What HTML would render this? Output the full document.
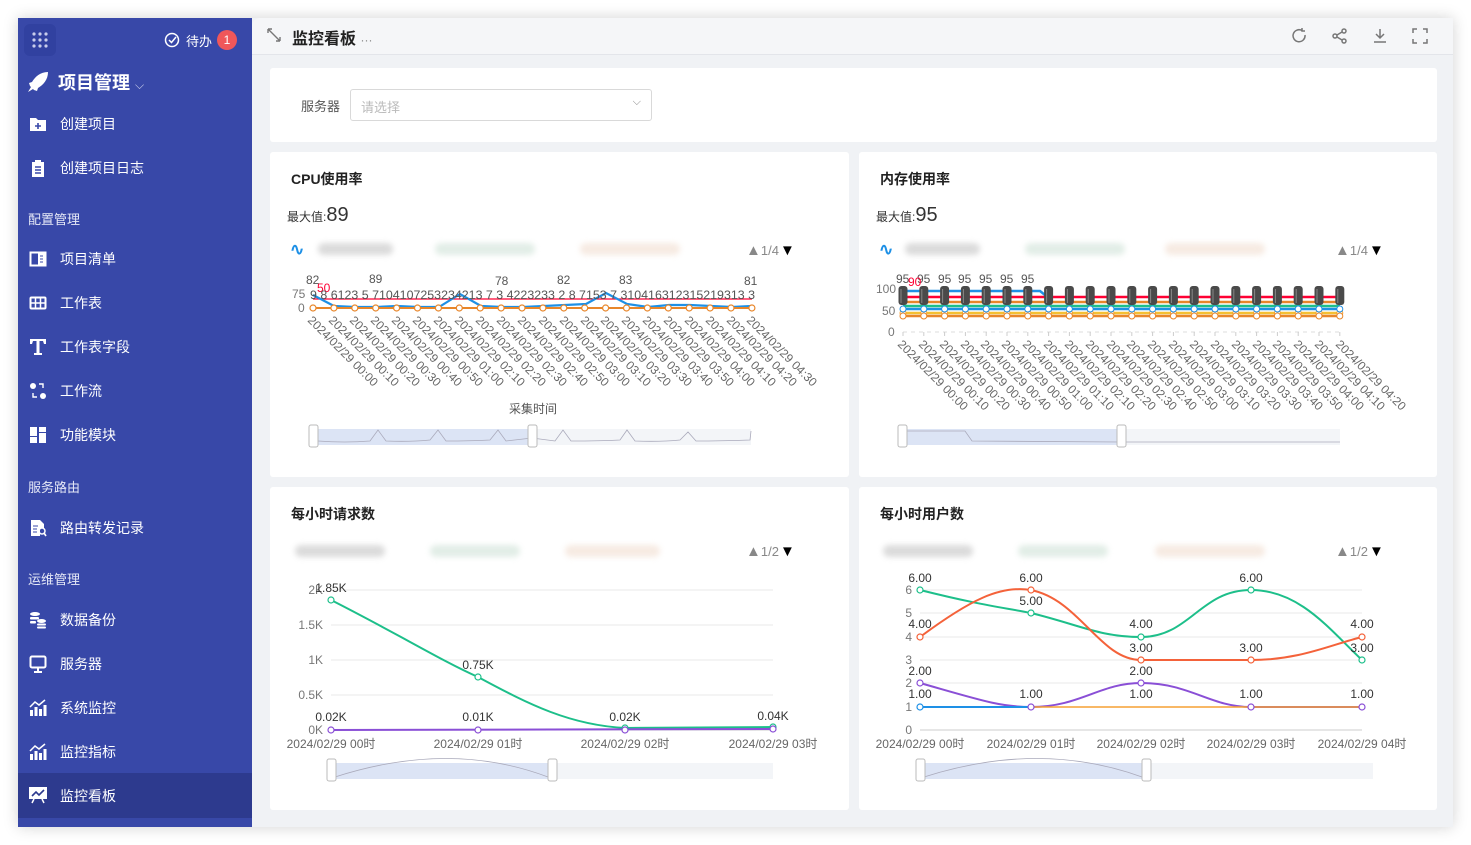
<!DOCTYPE html>
<html><head><meta charset="utf-8">
<style>
*{box-sizing:border-box;margin:0;padding:0}
body{width:1471px;height:845px;background:#fff;font-family:"Liberation Sans","Noto Sans CJK SC",sans-serif;position:relative;overflow:hidden}
#frame{position:absolute;left:18px;top:18px;width:1435px;height:809px;background:#f0f2f5;box-shadow:0 0 14px rgba(0,0,0,.18);overflow:hidden}
#side{position:absolute;left:0;top:0;width:234px;height:809px;background:#3848a8;color:#fff}
.mi{position:absolute;left:0;width:234px;height:44px;font-size:14px;display:flex;align-items:center;padding-left:42px}
.mi svg{position:absolute;left:11px;top:13px}
.sec{position:absolute;left:10px;font-size:13px;color:#e6e9f7}
#head{position:absolute;left:234px;top:0;width:1201px;height:37px;background:#f5f6f8;border-bottom:1px solid #e3e5ea;border-top-left-radius:8px}
.card{position:absolute;background:#fff;border-radius:3px}
.ct{position:absolute;left:21px;top:17px;font-size:14px;font-weight:bold;color:#222}
svg text{font-family:"Liberation Sans","Noto Sans CJK SC",sans-serif}
.blur{position:absolute;height:12px;background:#ccc;border-radius:6px;filter:blur(3px);opacity:.7}
</style></head><body>
<div id="frame">
<div id="side">
 <div style="position:absolute;left:6px;top:6px;width:32px;height:32px;border-radius:6px;background:#3141a0"></div>
 <svg style="position:absolute;left:14px;top:14px" width="16" height="16"><g fill="#c8cdeb"><circle cx="2" cy="2" r="1.6"/><circle cx="8" cy="2" r="1.6"/><circle cx="14" cy="2" r="1.6"/><circle cx="2" cy="8" r="1.6"/><circle cx="8" cy="8" r="1.6"/><circle cx="14" cy="8" r="1.6"/><circle cx="2" cy="14" r="1.6"/><circle cx="8" cy="14" r="1.6"/><circle cx="14" cy="14" r="1.6"/></g></svg>
 <svg style="position:absolute;left:146px;top:14px" width="16" height="16"><circle cx="8" cy="8" r="6.5" fill="none" stroke="#fff" stroke-width="1.5"/><path d="M5 8l2.5 2.5L12 5" fill="none" stroke="#fff" stroke-width="1.5"/></svg>
 <div style="position:absolute;left:168px;top:13px;font-size:13px">待办</div>
 <div style="position:absolute;left:199px;top:12px;width:20px;height:20px;border-radius:10px;background:#f0575a;font-size:12px;text-align:center;line-height:20px">1</div>
 <svg style="position:absolute;left:8px;top:52px" width="24" height="24"><path d="M22 2C14 2 9 7 6 12l-3 1 1 3 4 4 3 1 1-3c5-3 10-8 10-16zM5 17l-3 5 5-3z" fill="#fff"/></svg>
 <div style="position:absolute;left:40px;top:51px;font-size:18px;font-weight:bold">项目管理 <span style="font-size:12px;font-weight:normal;color:#c8cdeb">⌵</span></div>
 <div class="mi" style="top:84px"><svg width="18" height="18"><path d="M1 3h6l2 2h8v11H1z" fill="#fff"/><path d="M9 8v6M6 11h6" stroke="#3848a8" stroke-width="1.6"/></svg>创建项目</div>
 <div class="mi" style="top:128px"><svg width="18" height="18"><path d="M3 3h3V1h6v2h3v15H3z" fill="#fff"/><path d="M6 8h6M6 11h6M6 14h6" stroke="#3848a8" stroke-width="1.4"/></svg>创建项目日志</div>
 <div class="sec" style="top:191px">配置管理</div>
 <div class="mi" style="top:219px"><svg width="18" height="18"><rect x="1.5" y="2.5" width="15" height="13" fill="none" stroke="#fff" stroke-width="2"/><rect x="9" y="3" width="7" height="12" fill="#fff"/><path d="M11 6h3M11 9h3M11 12h3" stroke="#3848a8"/></svg>项目清单</div>
 <div class="mi" style="top:263px"><svg width="18" height="18"><rect x="1.5" y="3.5" width="15" height="11" rx="1" fill="none" stroke="#fff" stroke-width="2"/><path d="M1 9h16M6.5 4v10M11.5 4v10" stroke="#fff" stroke-width="1.5"/></svg>工作表</div>
 <div class="mi" style="top:307px"><svg width="18" height="18"><path d="M1 1h16v5h-2l-1-3h-3.5v12H13v2H5v-2h2.5V3H4L3 6H1z" fill="#fff"/></svg>工作表字段</div>
 <div class="mi" style="top:351px"><svg width="18" height="18" fill="#fff"><circle cx="4" cy="4" r="3"/><circle cx="14" cy="14" r="3"/><path d="M10 2h4v4M4 11v4h4" fill="none" stroke="#fff" stroke-width="1.4"/></svg>工作流</div>
 <div class="mi" style="top:395px"><svg width="18" height="18" fill="#fff"><rect x="1" y="1" width="7" height="9"/><rect x="1" y="11" width="7" height="6"/><rect x="10" y="1" width="7" height="5"/><rect x="10" y="7" width="7" height="10"/></svg>功能模块</div>
 <div class="sec" style="top:459px">服务路由</div>
 <div class="mi" style="top:488px"><svg width="18" height="18"><path d="M2 1h9l4 4v4h-4v8H2z" fill="#fff"/><circle cx="13" cy="12" r="3" fill="none" stroke="#fff" stroke-width="1.5"/><path d="M15 14l2 3" stroke="#fff" stroke-width="1.6"/><path d="M4 7h5M4 10h4M4 13h4" stroke="#3848a8"/></svg>路由转发记录</div>
 <div class="sec" style="top:551px">运维管理</div>
 <div class="mi" style="top:580px"><svg width="18" height="18" fill="#fff"><ellipse cx="6" cy="3" rx="5" ry="2"/><rect x="1" y="6" width="9" height="2.5" rx="1"/><rect x="1" y="10" width="6" height="2.5" rx="1"/><ellipse cx="12.5" cy="10" rx="4.5" ry="2"/><rect x="8" y="12.5" width="9" height="2" rx="1"/><rect x="8" y="15.5" width="9" height="2" rx="1"/></svg>数据备份</div>
 <div class="mi" style="top:624px"><svg width="18" height="18"><rect x="1.5" y="1.5" width="15" height="11" rx="1.5" fill="none" stroke="#fff" stroke-width="2"/><path d="M9 13v3M5 17h8" stroke="#fff" stroke-width="2"/></svg>服务器</div>
 <div class="mi" style="top:668px"><svg width="18" height="18" fill="#fff"><rect x="1" y="11" width="3" height="6"/><rect x="5.5" y="8" width="3" height="9"/><rect x="10" y="10" width="3" height="7"/><rect x="14.5" y="6" width="3" height="11"/><path d="M1 8l5-5 4 3 6-5" fill="none" stroke="#fff" stroke-width="1.5"/></svg>系统监控</div>
 <div class="mi" style="top:712px"><svg width="18" height="18" fill="#fff"><rect x="1" y="11" width="3" height="6"/><rect x="5.5" y="8" width="3" height="9"/><rect x="10" y="10" width="3" height="7"/><rect x="14.5" y="6" width="3" height="11"/><path d="M1 8l5-5 4 3 6-5" fill="none" stroke="#fff" stroke-width="1.5"/></svg>监控指标</div>
 <div class="mi" style="top:755px;height:45px;background:#2d3a8e"><svg width="18" height="18"><rect x="0" y="1" width="18" height="12" fill="#fff"/><path d="M3 10l4-4 3 3 5-5" fill="none" stroke="#2d3a8e" stroke-width="1.6"/><path d="M5 13l-2 4M13 13l2 4" stroke="#fff" stroke-width="1.5"/></svg>监控看板</div>
</div>
<div id="head">
 <svg style="position:absolute;left:15px;top:10px" width="14" height="14"><path d="M1 1l12 12M1 1h4M1 1v4M13 13h-4M13 13v-4" stroke="#777" stroke-width="1.4" fill="none"/></svg>
 <div style="position:absolute;left:40px;top:7px;font-size:16px;font-weight:bold;color:#222">监控看板 <span style="font-size:12px;color:#888;font-weight:normal">···</span></div>
 <svg style="position:absolute;left:1040px;top:10px" width="160" height="16" fill="none" stroke="#777" stroke-width="1.5">
  <path d="M13 7A6 6 0 1 1 10 2.5M10 0v3h3"/>
  <g transform="translate(40,0)"><circle cx="12" cy="3" r="2"/><circle cx="3" cy="8" r="2"/><circle cx="12" cy="13" r="2"/><path d="M5 7l5-3M5 9l5 3"/></g>
  <g transform="translate(80,0)"><path d="M8 1v9M4 6l4 4 4-4M2 14h12"/></g>
  <g transform="translate(120,0)"><path d="M1 5V1h4M11 1h4v4M15 11v4h-4M5 15H1v-4"/></g>
 </svg>
</div>
<div class="card" style="left:252px;top:50px;width:1167px;height:74px">
 <div style="position:absolute;left:31px;top:28px;font-size:13px;color:#555">服务器</div>
 <div style="position:absolute;left:80px;top:21px;width:302px;height:32px;border:1px solid #d9d9d9;border-radius:3px;font-size:13px;color:#bbb;padding:7px 10px">请选择<span style="position:absolute;right:10px;top:6px;color:#888;font-size:11px">⌵</span></div>
</div>
<div class="card" style="left:252px;top:134px;width:579px;height:325px">
 <div class="ct">CPU使用率</div>
 <div style="position:absolute;left:17px;top:52px;font-size:12px;color:#333">最大值:<span style="font-size:20px">89</span></div>
</div>
<div class="card" style="left:841px;top:134px;width:578px;height:325px">
 <div class="ct">内存使用率</div>
 <div style="position:absolute;left:17px;top:52px;font-size:12px;color:#333">最大值:<span style="font-size:20px">95</span></div>
</div>
<div class="card" style="left:252px;top:469px;width:579px;height:323px"><div class="ct">每小时请求数</div></div>
<div class="card" style="left:841px;top:469px;width:578px;height:323px"><div class="ct">每小时用户数</div></div>
</div>

<div class="blur" style="left:318px;top:243px;width:75px"></div><div class="blur" style="left:435px;top:243px;width:100px;background:#d5e6dc"></div><div class="blur" style="left:580px;top:243px;width:100px;background:#f3e2d6"></div>
<div class="blur" style="left:905px;top:243px;width:75px"></div><div class="blur" style="left:1025px;top:243px;width:100px;background:#d5e6dc"></div><div class="blur" style="left:1165px;top:243px;width:100px;background:#f3e2d6"></div>
<div class="blur" style="left:295px;top:545px;width:90px"></div><div class="blur" style="left:430px;top:545px;width:90px;background:#d5e6dc"></div><div class="blur" style="left:565px;top:545px;width:95px;background:#f3e2d6"></div>
<div class="blur" style="left:883px;top:545px;width:90px"></div><div class="blur" style="left:1018px;top:545px;width:90px;background:#d5e6dc"></div><div class="blur" style="left:1155px;top:545px;width:110px;background:#f3e2d6"></div>

<svg id="g" style="position:absolute;left:0;top:0" width="1471" height="845" font-size="12" fill="#666">
 <g font-size="13">
  <text x="290" y="255" fill="#1e90e6" font-size="17" font-weight="bold">∿</text><text x="746" y="255" fill="#888"><tspan font-size="15">▲</tspan>1/4</text><text x="780" y="255" fill="#000" font-size="15">▼</text>
  <text x="879" y="255" fill="#1e90e6" font-size="17" font-weight="bold">∿</text><text x="1335" y="255" fill="#888"><tspan font-size="15">▲</tspan>1/4</text><text x="1369" y="255" fill="#000" font-size="15">▼</text>
  <text x="746" y="556" fill="#888"><tspan font-size="15">▲</tspan>1/2</text><text x="780" y="556" fill="#000" font-size="15">▼</text>
  <text x="1335" y="556" fill="#888"><tspan font-size="15">▲</tspan>1/2</text><text x="1369" y="556" fill="#000" font-size="15">▼</text>
 </g>
 <text x="292" y="298" fill="#777">75</text><text x="298" y="312" fill="#777">0</text>
 <line x1="313" y1="299" x2="752" y2="299" stroke="#f03" stroke-width="1.2"/>
 <text x="317" y="292" fill="#f03">50</text>
 <polyline fill="none" stroke="#1e90e6" stroke-width="2.2" points="313,295 334,306 355,307 376,307 397,306 418,307 439,307 460,294 481,306 502,307 523,307 544,306 565,305 586,304 606,293 627,304 648,307 669,305 690,305 711,306 732,307 752,306"/>
 <polyline fill="none" stroke="#e8862a" stroke-width="2" points="313,308 752,308"/>
 <g id="cpuc"></g>
 <g font-size="12" fill="#555">
  <text x="306" y="284">82</text><text x="369" y="283">89</text><text x="495" y="285">78</text><text x="557" y="284">82</text><text x="619" y="284">83</text><text x="744" y="285">81</text>
  <text x="310" y="299" textLength="445" lengthAdjust="spacingAndGlyphs">9 8 6123 5 7104107253234213 7 3 4223233 2 8 7153 7 310416312315219313 3</text>
 </g>
 <text x="509" y="413" fill="#555">采集时间</text>
 <rect x="313" y="429" width="219" height="16" fill="#dce4f5"/><rect x="532" y="429" width="219" height="16" fill="#f3f5f8"/>
 <path d="M318 441 Q345 443 370 441 L378 430 L386 441 Q410 442 430 440 L438 430 L446 441 Q470 441 490 440 L498 430 L506 441 L532 438 L555 441 L563 430 L571 441 Q600 441 620 440 L627 430 L635 441 Q660 442 680 440 L688 432 L696 441 Q720 441 750 440 L751 431" fill="none" stroke="#aab" stroke-width=".8"/>
 <rect x="309" y="425" width="9" height="22" rx="2" fill="#fff" stroke="#bbb"/><rect x="528" y="425" width="9" height="22" rx="2" fill="#fff" stroke="#bbb"/>
 <text x="876" y="293" fill="#777">100</text><text x="882" y="315" fill="#777">50</text><text x="888" y="336" fill="#777">0</text>
 <line x1="903" y1="332" x2="1340" y2="332" stroke="#ddd" stroke-dasharray="4 4"/>
 <g id="memb"></g>
 <g fill="#555"><text x="896" y="283">95</text><text x="917" y="283">95</text><text x="938" y="283">95</text><text x="958" y="283">95</text><text x="979" y="283">95</text><text x="1000" y="283">95</text><text x="1021" y="283">95</text></g>
 <text x="908" y="286" fill="#f03">90</text>
 <rect x="903" y="429" width="218" height="16" fill="#dce4f5"/><rect x="1121" y="429" width="219" height="16" fill="#f3f5f8"/>
 <path d="M907 431 L965 431 L972 441 L1120 442 L1340 442" fill="none" stroke="#aab" stroke-width=".8"/>
 <rect x="898" y="425" width="9" height="22" rx="2" fill="#fff" stroke="#bbb"/><rect x="1117" y="425" width="9" height="22" rx="2" fill="#fff" stroke="#bbb"/>
 <g stroke="#e8e8e8"><line x1="331" y1="590" x2="773" y2="590"/><line x1="331" y1="625" x2="773" y2="625"/><line x1="331" y1="660" x2="773" y2="660"/><line x1="331" y1="695" x2="773" y2="695"/><line x1="331" y1="730" x2="773" y2="730" stroke="#ccc"/></g>
 <g fill="#777" text-anchor="end"><text x="323" y="594">2K</text><text x="323" y="629">1.5K</text><text x="323" y="664">1K</text><text x="323" y="699">0.5K</text><text x="323" y="734">0K</text></g>
 <path d="M331 600 C400 635 440 660 478 677 C530 705 570 725 625 728 L773 727" fill="none" stroke="#1dbf8a" stroke-width="2"/>
 <line x1="331" y1="730" x2="773" y2="729" stroke="#8a4fd6" stroke-width="2"/>
 <g fill="#fff" stroke-width="1.2"><circle cx="331" cy="600" r="3" stroke="#1dbf8a"/><circle cx="478" cy="677" r="3" stroke="#1dbf8a"/><circle cx="625" cy="728" r="3" stroke="#1dbf8a"/><circle cx="773" cy="727" r="3" stroke="#1dbf8a"/><circle cx="331" cy="730" r="3" stroke="#8a4fd6"/><circle cx="478" cy="730" r="3" stroke="#8a4fd6"/><circle cx="625" cy="730" r="3" stroke="#8a4fd6"/><circle cx="773" cy="729" r="3" stroke="#8a4fd6"/></g>
 <g fill="#333" text-anchor="middle"><text x="331" y="592">1.85K</text><text x="478" y="669">0.75K</text><text x="331" y="721">0.02K</text><text x="478" y="721">0.01K</text><text x="625" y="721">0.02K</text><text x="773" y="720">0.04K</text></g>
 <g fill="#666" text-anchor="middle"><text x="331" y="748">2024/02/29 00时</text><text x="478" y="748">2024/02/29 01时</text><text x="625" y="748">2024/02/29 02时</text><text x="773" y="748">2024/02/29 03时</text></g>
 <rect x="331" y="763" width="221" height="16" fill="#dce4f5"/><rect x="552" y="763" width="221" height="16" fill="#f3f5f8"/>
 <path d="M335 777 Q450 740 548 777" fill="none" stroke="#aab" stroke-width=".8"/>
 <rect x="327" y="759" width="9" height="22" rx="2" fill="#fff" stroke="#bbb"/><rect x="548" y="759" width="9" height="22" rx="2" fill="#fff" stroke="#bbb"/>
 <g stroke="#e8e8e8"><line x1="920" y1="590" x2="1362" y2="590"/><line x1="920" y1="613" x2="1362" y2="613"/><line x1="920" y1="637" x2="1362" y2="637"/><line x1="920" y1="660" x2="1362" y2="660"/><line x1="920" y1="683" x2="1362" y2="683"/><line x1="920" y1="707" x2="1362" y2="707"/><line x1="920" y1="730" x2="1362" y2="730" stroke="#ccc"/></g>
 <g fill="#777" text-anchor="end"><text x="912" y="594">6</text><text x="912" y="617">5</text><text x="912" y="641">4</text><text x="912" y="664">3</text><text x="912" y="687">2</text><text x="912" y="711">1</text><text x="912" y="734">0</text></g>
 <path d="M920 590 C980 605 1000 607 1031 613 C1080 625 1100 637 1141 637 C1190 637 1200 590 1251 590 C1300 590 1330 630 1362 660" fill="none" stroke="#1dbf8a" stroke-width="2"/>
 <path d="M920 637 C970 600 1000 585 1031 590 C1080 600 1100 660 1141 660 L1251 660 C1300 660 1330 645 1362 637" fill="none" stroke="#f4623a" stroke-width="2"/>
 <path d="M920 683 C980 700 1000 707 1031 707 C1080 707 1100 683 1141 683 C1190 683 1210 707 1251 707 L1362 707" fill="none" stroke="#8a4fd6" stroke-width="2"/>
 <line x1="920" y1="707" x2="1031" y2="707" stroke="#1e90e6" stroke-width="2"/><line x1="1031" y1="707" x2="1362" y2="707" stroke="#f5a033" stroke-width="1.5"/>
 <g fill="#fff" stroke-width="1.2"><circle cx="920" cy="590" r="3" stroke="#1dbf8a"/><circle cx="1031" cy="613" r="3" stroke="#1dbf8a"/><circle cx="1141" cy="637" r="3" stroke="#1dbf8a"/><circle cx="1251" cy="590" r="3" stroke="#1dbf8a"/><circle cx="1362" cy="660" r="3" stroke="#1dbf8a"/>
 <circle cx="920" cy="637" r="3" stroke="#f4623a"/><circle cx="1031" cy="590" r="3" stroke="#f4623a"/><circle cx="1141" cy="660" r="3" stroke="#f4623a"/><circle cx="1251" cy="660" r="3" stroke="#f4623a"/><circle cx="1362" cy="637" r="3" stroke="#f4623a"/>
 <circle cx="920" cy="683" r="3" stroke="#8a4fd6"/><circle cx="1031" cy="707" r="3" stroke="#8a4fd6"/><circle cx="1141" cy="683" r="3" stroke="#8a4fd6"/><circle cx="1251" cy="707" r="3" stroke="#8a4fd6"/><circle cx="1362" cy="707" r="3" stroke="#8a4fd6"/><circle cx="920" cy="707" r="3" stroke="#1e90e6"/></g>
 <g fill="#333" text-anchor="middle"><text x="920" y="582">6.00</text><text x="1031" y="582">6.00</text><text x="1031" y="605">5.00</text><text x="1251" y="582">6.00</text><text x="920" y="628">4.00</text><text x="1141" y="628">4.00</text><text x="1362" y="628">4.00</text><text x="1141" y="652">3.00</text><text x="1251" y="652">3.00</text><text x="1362" y="652">3.00</text><text x="920" y="675">2.00</text><text x="1141" y="675">2.00</text><text x="920" y="698">1.00</text><text x="1031" y="698">1.00</text><text x="1141" y="698">1.00</text><text x="1251" y="698">1.00</text><text x="1362" y="698">1.00</text></g>
 <g fill="#666" text-anchor="middle"><text x="920" y="748">2024/02/29 00时</text><text x="1031" y="748">2024/02/29 01时</text><text x="1141" y="748">2024/02/29 02时</text><text x="1251" y="748">2024/02/29 03时</text><text x="1362" y="748">2024/02/29 04时</text></g>
 <rect x="920" y="763" width="226" height="16" fill="#dce4f5"/><rect x="1146" y="763" width="227" height="16" fill="#f3f5f8"/>
 <path d="M924 777 Q1040 740 1142 777" fill="none" stroke="#aab" stroke-width=".8"/>
 <rect x="916" y="759" width="9" height="22" rx="2" fill="#fff" stroke="#bbb"/><rect x="1142" y="759" width="9" height="22" rx="2" fill="#fff" stroke="#bbb"/>
 <g fill="#666">
  <text transform="translate(307,321) rotate(45)">2024/02/29 00:00</text><text transform="translate(328,321) rotate(45)">2024/02/29 00:10</text><text transform="translate(349,321) rotate(45)">2024/02/29 00:20</text><text transform="translate(370,321) rotate(45)">2024/02/29 00:30</text><text transform="translate(391,321) rotate(45)">2024/02/29 00:40</text><text transform="translate(412,321) rotate(45)">2024/02/29 00:50</text><text transform="translate(433,321) rotate(45)">2024/02/29 01:00</text><text transform="translate(454,321) rotate(45)">2024/02/29 02:10</text><text transform="translate(475,321) rotate(45)">2024/02/29 02:20</text><text transform="translate(496,321) rotate(45)">2024/02/29 02:30</text><text transform="translate(517,321) rotate(45)">2024/02/29 02:40</text><text transform="translate(538,321) rotate(45)">2024/02/29 02:50</text><text transform="translate(559,321) rotate(45)">2024/02/29 03:00</text><text transform="translate(580,321) rotate(45)">2024/02/29 03:10</text><text transform="translate(600,321) rotate(45)">2024/02/29 03:20</text><text transform="translate(621,321) rotate(45)">2024/02/29 03:30</text><text transform="translate(642,321) rotate(45)">2024/02/29 03:40</text><text transform="translate(663,321) rotate(45)">2024/02/29 03:50</text><text transform="translate(684,321) rotate(45)">2024/02/29 04:00</text><text transform="translate(705,321) rotate(45)">2024/02/29 04:10</text><text transform="translate(726,321) rotate(45)">2024/02/29 04:20</text><text transform="translate(746,321) rotate(45)">2024/02/29 04:30</text>
  <text transform="translate(897,345) rotate(45)">2024/02/29 00:00</text><text transform="translate(918,345) rotate(45)">2024/02/29 00:10</text><text transform="translate(939,345) rotate(45)">2024/02/29 00:20</text><text transform="translate(960,345) rotate(45)">2024/02/29 00:30</text><text transform="translate(980,345) rotate(45)">2024/02/29 00:40</text><text transform="translate(1001,345) rotate(45)">2024/02/29 00:50</text><text transform="translate(1022,345) rotate(45)">2024/02/29 01:00</text><text transform="translate(1043,345) rotate(45)">2024/02/29 01:10</text><text transform="translate(1064,345) rotate(45)">2024/02/29 02:10</text><text transform="translate(1085,345) rotate(45)">2024/02/29 02:20</text><text transform="translate(1106,345) rotate(45)">2024/02/29 02:30</text><text transform="translate(1126,345) rotate(45)">2024/02/29 02:40</text><text transform="translate(1147,345) rotate(45)">2024/02/29 02:50</text><text transform="translate(1168,345) rotate(45)">2024/02/29 03:00</text><text transform="translate(1189,345) rotate(45)">2024/02/29 03:10</text><text transform="translate(1210,345) rotate(45)">2024/02/29 03:20</text><text transform="translate(1231,345) rotate(45)">2024/02/29 03:30</text><text transform="translate(1252,345) rotate(45)">2024/02/29 03:40</text><text transform="translate(1272,345) rotate(45)">2024/02/29 03:50</text><text transform="translate(1293,345) rotate(45)">2024/02/29 04:00</text><text transform="translate(1314,345) rotate(45)">2024/02/29 04:10</text><text transform="translate(1335,345) rotate(45)">2024/02/29 04:20</text>
 </g>
</svg>
<script>
var ns="http://www.w3.org/2000/svg";
function el(p,t,a){var e=document.createElementNS(ns,t);for(var k in a)e.setAttribute(k,a[k]);p.appendChild(e);return e;}
var c=document.getElementById("cpuc");
for(var i=0;i<22;i++){var x=313+i*20.9;el(c,"circle",{cx:x,cy:308,r:3,fill:"#fff",stroke:"#e8862a","stroke-width":1.2});}
var m=document.getElementById("memb");
var cols=[["#f03",297],["#e8862a",302],["#1dbf8a",306],["#1e90e6",309],["#f5c033",313],["#e8862a",316]];
cols.forEach(function(c2){el(m,"line",{x1:903,y1:c2[1],x2:1340,y2:c2[1],stroke:c2[0],"stroke-width":2.5});});
el(m,"polyline",{points:"903,291 1040,291 1050,299",fill:"none",stroke:"#1e90e6","stroke-width":2.5});
for(var i=0;i<22;i++){var x=903+i*20.8;
 el(m,"rect",{x:x-4.5,y:286,width:9,height:19,rx:3,fill:"#4a4a4a"});
 el(m,"line",{x1:x-2,y1:289,x2:x-2,y2:303,stroke:"#888","stroke-width":1});
 el(m,"circle",{cx:x,cy:313,r:3,fill:"#fff",stroke:"#f5a033"});el(m,"circle",{cx:x,cy:316,r:3,fill:"#fff",stroke:"#e8862a"});el(m,"circle",{cx:x,cy:309,r:3,fill:"#fff",stroke:"#1e90e6"});
 el(m,"line",{x1:x,y1:332,x2:x,y2:336,stroke:"#ccc"});}
</script>
</body></html>
